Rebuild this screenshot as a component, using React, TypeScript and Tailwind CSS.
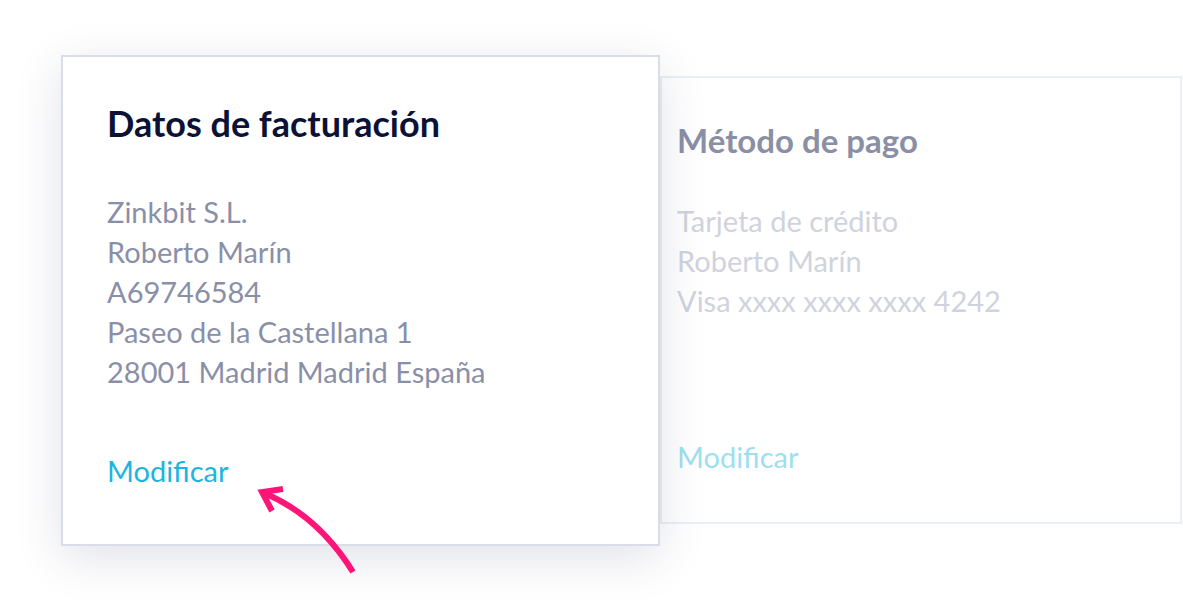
import React from 'react'

const font = { fontFamily: 'Lato, "Open Sans", sans-serif' }

const Arrow = () => (
  <svg
    className="pointer-events-none absolute left-[240px] top-[470px] z-20"
    width="140"
    height="120"
    viewBox="240 470 140 120"
    fill="none"
  >
    <path d="M353 572 C 330 535, 300 508, 264 493" stroke="#ff1477" strokeWidth="6" strokeLinecap="butt" />
    <path d="M272 511 L 262 492 L 283 489" stroke="#ff1477" strokeWidth="6" strokeLinejoin="miter" />
  </svg>
)

export default function App() {
  return (
    <div className="relative h-[614px] w-[1183px] overflow-hidden bg-white" style={font}>
      <div className="flex items-start pl-[61px] pt-[55px]">
        <div className="relative z-10 flex w-[599px] flex-col border-2 border-[#d9dce9] bg-white pb-[53px] pl-[44px] pt-[46px] shadow-[0_12px_44px_rgba(40,50,100,0.14)]">
          <h2 className="text-[36px] font-bold leading-[40px] text-[#0b1236]">Datos de facturación</h2>
          <div className="mt-[49px] text-[29px] leading-[40px] text-[#8a8fa8]">
            <p>Zinkbit S.L.</p>
            <p>Roberto Marín</p>
            <p>A69746584</p>
            <p>Paseo de la Castellana 1</p>
            <p>28001 Madrid Madrid España</p>
          </div>
          <a className="mt-[59px] text-[29px] leading-[40px] text-[#1cb5e0]">Modificar</a>
        </div>
        <div className="mt-[21px] flex w-[522px] flex-col border-2 border-[#eceef5] bg-white pb-[45px] pl-[15px] pt-[42px]">
          <h2 className="text-[33px] font-bold leading-[40px] text-[#8a8fa5]">Método de pago</h2>
          <div className="mt-[41px] text-[29px] leading-[40px] text-[#d0d3de]">
            <p>Tarjeta de crédito</p>
            <p>Roberto Marín</p>
            <p>Visa xxxx xxxx xxxx 4242</p>
          </div>
          <a className="mt-[116px] text-[29px] leading-[40px] text-[#9ddff0]">Modificar</a>
        </div>
      </div>
      <Arrow />
    </div>
  )
}
